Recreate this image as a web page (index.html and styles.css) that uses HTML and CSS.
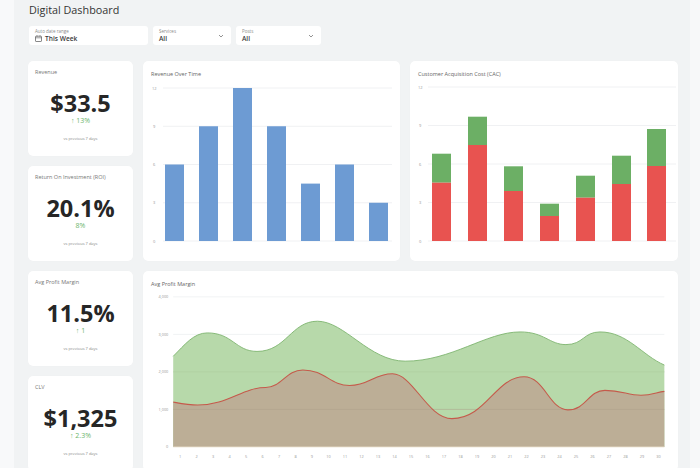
FILE: index.html
```html
<!DOCTYPE html>
<html>
<head>
<meta charset="utf-8">
<link rel="stylesheet" href="styles.css">
</head>
<body>
<div class="app">
  <div class="strip"></div>
  <main class="main">
    <h1 class="title">Digital Dashboard</h1>
    <div class="filters">
      <div class="filter f1">
        <div class="flabel">Auto date range</div>
        <div class="fvalue">
          <svg class="cal" viewBox="0 0 7 7" width="7" height="7"><rect x="0.5" y="1.2" width="6" height="5.3" rx="0.6" fill="none" stroke="#555" stroke-width="0.7"/><line x1="0.5" y1="2.8" x2="6.5" y2="2.8" stroke="#555" stroke-width="0.6"/><line x1="2" y1="0.3" x2="2" y2="1.6" stroke="#555" stroke-width="0.6"/><line x1="5" y1="0.3" x2="5" y2="1.6" stroke="#555" stroke-width="0.6"/></svg>
          <span>This Week</span>
        </div>
      </div>
      <div class="filter f2">
        <div class="ftext">
          <div class="flabel">Services</div>
          <div class="fvalue">All</div>
        </div>
        <svg class="chev" viewBox="0 0 6 4" width="6" height="4"><path d="M1 1 L3 3 L5 1" fill="none" stroke="#777" stroke-width="0.8"/></svg>
      </div>
      <div class="filter f3">
        <div class="ftext">
          <div class="flabel">Posts</div>
          <div class="fvalue">All</div>
        </div>
        <svg class="chev" viewBox="0 0 6 4" width="6" height="4"><path d="M1 1 L3 3 L5 1" fill="none" stroke="#777" stroke-width="0.8"/></svg>
      </div>
    </div>

    <div class="grid">
      <div class="card stat s1">
        <div class="slabel">Revenue</div>
        <div class="snum">$33.5</div>
        <div class="schange">↑ 13%</div>
        <div class="svs">vs previous 7 days</div>
      </div>

      <div class="card chart c1">
        <div class="ctitle">Revenue Over Time</div>
        <svg class="csvg" viewBox="0 0 257 180" width="257" height="180">
          <g stroke="#eceef0" stroke-width="0.8">
            <line x1="20" y1="7" x2="249" y2="7"/>
            <line x1="20" y1="45.25" x2="249" y2="45.25"/>
            <line x1="20" y1="83.5" x2="249" y2="83.5"/>
            <line x1="20" y1="121.75" x2="249" y2="121.75"/>
            <line x1="20" y1="160" x2="249" y2="160"/>
          </g>
          <g class="axis">
            <text x="9" y="8.5">12</text>
            <text x="10" y="46.7">9</text>
            <text x="10" y="85">6</text>
            <text x="10" y="123.2">3</text>
            <text x="10" y="161.5">0</text>
          </g>
          <g fill="#6d9bd3">
            <rect x="22" y="83.5" width="19" height="76.5"/>
            <rect x="56" y="45.25" width="19" height="114.75"/>
            <rect x="90" y="7" width="19" height="153"/>
            <rect x="124" y="45.25" width="19" height="114.75"/>
            <rect x="158" y="102.6" width="19" height="57.4"/>
            <rect x="192" y="83.5" width="19" height="76.5"/>
            <rect x="226" y="121.75" width="19" height="38.25"/>
          </g>
        </svg>
      </div>

      <div class="card chart c2">
        <div class="ctitle">Customer Acquisition Cost (CAC)</div>
        <svg class="csvg" viewBox="0 0 268 180" width="268" height="180">
          <g stroke="#eceef0" stroke-width="0.8">
            <line x1="18" y1="6" x2="266" y2="6"/>
            <line x1="18" y1="44.5" x2="266" y2="44.5"/>
            <line x1="18" y1="83" x2="266" y2="83"/>
            <line x1="18" y1="121.5" x2="266" y2="121.5"/>
            <line x1="18" y1="160" x2="266" y2="160"/>
          </g>
          <g class="axis">
            <text x="8" y="7.5">12</text>
            <text x="9" y="46">9</text>
            <text x="9" y="84.5">6</text>
            <text x="9" y="123">3</text>
            <text x="9" y="161.5">0</text>
          </g>
          <g fill="#6caf65">
            <rect x="22" y="72.7" width="19" height="29"/>
            <rect x="58" y="35.7" width="19" height="28.3"/>
            <rect x="94" y="85.3" width="19" height="24.7"/>
            <rect x="130" y="122.7" width="19" height="12.3"/>
            <rect x="166" y="94.7" width="19" height="22"/>
            <rect x="202" y="74.7" width="19" height="28.3"/>
            <rect x="237" y="48" width="19" height="37"/>
          </g>
          <g fill="#e85350">
            <rect x="22" y="101.7" width="19" height="58.3"/>
            <rect x="58" y="64" width="19" height="96"/>
            <rect x="94" y="110" width="19" height="50"/>
            <rect x="130" y="135" width="19" height="25"/>
            <rect x="166" y="116.7" width="19" height="43.3"/>
            <rect x="202" y="103" width="19" height="57"/>
            <rect x="237" y="85" width="19" height="75"/>
          </g>
        </svg>
      </div>

      <div class="card stat s2">
        <div class="slabel">Return On Investment (ROI)</div>
        <div class="snum">20.1%</div>
        <div class="schange">8%</div>
        <div class="svs">vs previous 7 days</div>
      </div>

      <div class="card stat s3">
        <div class="slabel">Avg Profit Margin</div>
        <div class="snum">11.5%</div>
        <div class="schange">↑ 1</div>
        <div class="svs">vs previous 7 days</div>
      </div>

      <div class="card chart c3">
        <div class="ctitle">Avg Profit Margin</div>
        <svg class="csvg" viewBox="0 0 535 185" width="535" height="185">
          <g stroke="#eceef0" stroke-width="0.8">
            <line x1="24" y1="6" x2="528" y2="6"/>
            <line x1="24" y1="44.5" x2="528" y2="44.5"/>
            <line x1="24" y1="83" x2="528" y2="83"/>
            <line x1="24" y1="121.5" x2="528" y2="121.5"/>
          </g>
          <path d="M24,67 C36,55 45,43 59,43 C85,43 88,62 110,62 C140,62 145,31 172,31 C200,31 225,72 262,72 C310,72 345,42 380,42 C405,42 410,55 427,55 C445,55 445,42 462,42 C490,42 505,66 528,76 L528,160 L24,160 Z" fill="#b7d9aa"/>
          <path d="M24,114 C35,116 40,117 49,117 C80,117 95,99 119,99 C135,99 140,81 157,81 C180,81 185,97 205,97 C225,97 230,85 249,85 C270,85 285,131 310,131 C345,131 355,88 384,88 C405,88 410,122 429,122 C448,122 450,102 467,102 C485,102 490,107 504,107 C515,107 520,104 528,103 L528,160 L24,160 Z" fill="#bcae96"/>
          <g stroke-width="0.5">
            <line x1="24" y1="83" x2="528" y2="83" stroke="#a9c99c"/>
            <line x1="24" y1="121.5" x2="528" y2="121.5" stroke="#ada089"/>
          </g>
          <path d="M24,67 C36,55 45,43 59,43 C85,43 88,62 110,62 C140,62 145,31 172,31 C200,31 225,72 262,72 C310,72 345,42 380,42 C405,42 410,55 427,55 C445,55 445,42 462,42 C490,42 505,66 528,76" fill="none" stroke="#7ab26c" stroke-width="0.9"/>
          <path d="M24,114 C35,116 40,117 49,117 C80,117 95,99 119,99 C135,99 140,81 157,81 C180,81 185,97 205,97 C225,97 230,85 249,85 C270,85 285,131 310,131 C345,131 355,88 384,88 C405,88 410,122 429,122 C448,122 450,102 467,102 C485,102 490,107 504,107 C515,107 520,104 528,103" fill="none" stroke="#c55a4b" stroke-width="1.1"/>
          <line x1="24" y1="160" x2="528" y2="160" stroke="#e6dcc8" stroke-width="0.8"/>
          <g class="axis yend">
            <text x="19" y="7.5">4,000</text>
            <text x="19" y="46">3,000</text>
            <text x="19" y="84.5">2,000</text>
            <text x="19" y="123">1,000</text>
            <text x="19" y="161.5">0</text>
          </g>
          <g class="axis xmid">
            <text x="31" y="171.5">1</text>
            <text x="47.9" y="171.5">2</text>
            <text x="64.9" y="171.5">3</text>
            <text x="81.8" y="171.5">4</text>
            <text x="98.7" y="171.5">5</text>
            <text x="115.7" y="171.5">6</text>
            <text x="132.6" y="171.5">7</text>
            <text x="149.5" y="171.5">8</text>
            <text x="166.4" y="171.5">9</text>
            <text x="183.4" y="171.5">10</text>
            <text x="200.3" y="171.5">11</text>
            <text x="217.2" y="171.5">12</text>
            <text x="234.2" y="171.5">13</text>
            <text x="251.1" y="171.5">14</text>
            <text x="268" y="171.5">15</text>
            <text x="285" y="171.5">16</text>
            <text x="301.9" y="171.5">17</text>
            <text x="318.8" y="171.5">18</text>
            <text x="335.7" y="171.5">19</text>
            <text x="352.7" y="171.5">20</text>
            <text x="369.6" y="171.5">21</text>
            <text x="386.5" y="171.5">22</text>
            <text x="403.5" y="171.5">23</text>
            <text x="420.4" y="171.5">24</text>
            <text x="437.3" y="171.5">25</text>
            <text x="454.3" y="171.5">26</text>
            <text x="471.2" y="171.5">27</text>
            <text x="488.1" y="171.5">28</text>
            <text x="505" y="171.5">29</text>
            <text x="522" y="171.5">30</text>
          </g>
        </svg>
      </div>

      <div class="card stat s4">
        <div class="slabel">CLV</div>
        <div class="snum">$1,325</div>
        <div class="schange">↑ 2.3%</div>
        <div class="svs">vs previous 7 days</div>
      </div>
    </div>
  </main>
  <div class="rstrip"></div>
</div>
</body>
</html>
```

FILE: styles.css
```css
html, body {
  margin: 0;
  padding: 0;
  height: 100%;
  overflow: hidden;
}
body {
  font-family: "Open Sans", "Liberation Sans", sans-serif;
  background: #f1f3f4;
  color: #333;
}
.app {
  display: flex;
  height: 468px;
  overflow: hidden;
}
.strip {
  width: 14px;
  flex: none;
  background: #f8f9fa;
}
.rstrip {
  width: 10px;
  flex: none;
  background: #f7f8f9;
}
.main {
  flex: 1;
  padding: 2px 0 0 14px;
  min-width: 0;
}
.title {
  margin: 0 0 8px 1px;
  font-size: 10.8px;
  line-height: 16px;
  font-weight: 500;
  color: #333;
}
.filters {
  display: flex;
  gap: 5px;
  margin-left: 1px;
  margin-bottom: 16px;
}
.filter {
  background: #fff;
  border-radius: 3px;
  height: 19px;
  box-sizing: border-box;
  padding: 2px 6px 0 6px;
}
.f1 { width: 119px; }
.f2 { width: 78px; display: flex; align-items: center; justify-content: space-between; padding-top: 0; padding-right: 7px; }
.f3 { width: 85px; display: flex; align-items: center; justify-content: space-between; padding-top: 0; padding-right: 7px; }
.flabel {
  font-size: 4.5px;
  line-height: 6px;
  color: #8a8a8a;
}
.fvalue {
  font-size: 6.6px;
  line-height: 9px;
  font-weight: 600;
  color: #3a3a3a;
  display: flex;
  align-items: center;
  gap: 3px;
}
.cal { display: block; }
.chev { display: block; }
.grid {
  display: grid;
  grid-template-columns: 105px 257px 268px;
  grid-template-rows: 95px 95px 95px 95px;
  column-gap: 10px;
  row-gap: 10px;
}
.card {
  background: #fff;
  border-radius: 5px;
  box-shadow: 0 0 1px rgba(0,0,0,0.04);
}
.stat {
  display: flex;
  flex-direction: column;
  align-items: center;
  padding-top: 7px;
  box-sizing: border-box;
}
.slabel {
  align-self: flex-start;
  padding-left: 7px;
  font-size: 5.5px;
  line-height: 8px;
  color: #777;
}
.snum {
  margin-top: 16px;
  font-size: 23.5px;
  line-height: 22px;
  font-weight: 700;
  color: #262626;
}
.schange {
  margin-top: 3px;
  font-size: 7px;
  line-height: 8px;
  color: #6cb56c;
}
.svs {
  margin-top: 12px;
  font-size: 4px;
  line-height: 4px;
  color: #888;
}
.s1 { grid-column: 1; grid-row: 1; }
.s2 { grid-column: 1; grid-row: 2; }
.s3 { grid-column: 1; grid-row: 3; }
.s4 { grid-column: 1; grid-row: 4; }
.c1 { grid-column: 2; grid-row: 1 / span 2; }
.c2 { grid-column: 3; grid-row: 1 / span 2; }
.c3 { grid-column: 2 / span 2; grid-row: 3 / span 2; }
.chart {
  display: flex;
  flex-direction: column;
}
.ctitle {
  height: 20px;
  box-sizing: border-box;
  padding: 9px 0 0 8px;
  font-size: 5.5px;
  line-height: 8px;
  color: #666;
}
.csvg { display: block; }
.axis text {
  font-family: "Open Sans", "Liberation Sans", sans-serif;
  font-size: 4px;
  fill: #999;
}
.yend text { text-anchor: end; }
.xmid text { text-anchor: middle; }
```
